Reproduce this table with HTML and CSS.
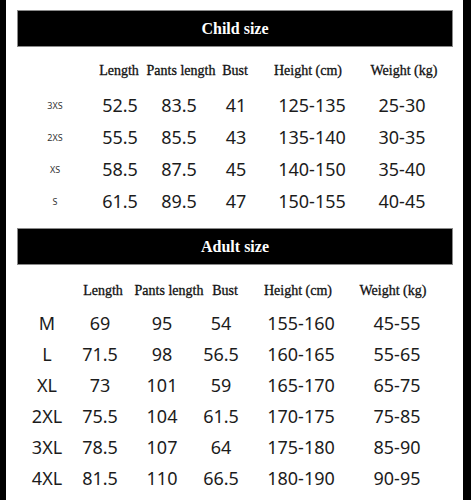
FILE: index.html
```html
<!DOCTYPE html>
<html>
<head>
<meta charset="utf-8">
<link rel="stylesheet" href="styles.css">
</head>
<body>
<div class="sheet">
  <div class="bar bar-child">Child size</div>
  <div class="row head child-head">
    <span></span><span>Length</span><span>Pants length</span><span>Bust</span><span>Height (cm)</span><span>Weight (kg)</span>
  </div>
  <div class="row data child-data"><span class="sz">3XS</span><span>52.5</span><span>83.5</span><span>41</span><span>125-135</span><span>25-30</span></div>
  <div class="row data child-data"><span class="sz">2XS</span><span>55.5</span><span>85.5</span><span>43</span><span>135-140</span><span>30-35</span></div>
  <div class="row data child-data"><span class="sz">XS</span><span>58.5</span><span>87.5</span><span>45</span><span>140-150</span><span>35-40</span></div>
  <div class="row data child-data"><span class="sz">S</span><span>61.5</span><span>89.5</span><span>47</span><span>150-155</span><span>40-45</span></div>

  <div class="bar bar-adult">Adult size</div>
  <div class="row head adult-head">
    <span></span><span>Length</span><span>Pants length</span><span>Bust</span><span>Height (cm)</span><span>Weight (kg)</span>
  </div>
  <div class="row data adult-data"><span>M</span><span>69</span><span>95</span><span>54</span><span>155-160</span><span>45-55</span></div>
  <div class="row data adult-data"><span>L</span><span>71.5</span><span>98</span><span>56.5</span><span>160-165</span><span>55-65</span></div>
  <div class="row data adult-data"><span>XL</span><span>73</span><span>101</span><span>59</span><span>165-170</span><span>65-75</span></div>
  <div class="row data adult-data"><span>2XL</span><span>75.5</span><span>104</span><span>61.5</span><span>170-175</span><span>75-85</span></div>
  <div class="row data adult-data"><span>3XL</span><span>78.5</span><span>107</span><span>64</span><span>175-180</span><span>85-90</span></div>
  <div class="row data adult-data"><span>4XL</span><span>81.5</span><span>110</span><span>66.5</span><span>180-190</span><span>90-95</span></div>
  <p class="note">1. Manual measurement, there may be an error of 1-3cm.</p>
</div>
</body>
</html>
```

FILE: styles.css
```css
html, body {
  margin: 0;
  padding: 0;
  background: #000;
}
.sheet {
  margin-left: 6px;
  width: 457px;
  min-height: 520px;
  background: #fff;
  padding-top: 10px;
  box-sizing: border-box;
  overflow: hidden;
}
.bar {
  margin-left: 11px;
  width: 436px;
  height: 37px;
  box-sizing: border-box;
  background: #000;
  border: 1px solid #8a8a8a;
  color: #fff;
  font-family: "Liberation Serif", "Times New Roman", serif;
  font-weight: bold;
  font-size: 16px;
  display: flex;
  align-items: center;
  justify-content: center;
}
.bar-adult {
  margin-top: 11px;
}
.row {
  display: grid;
  justify-items: center;
  align-items: center;
  white-space: nowrap;
}
.head {
  font-family: "Liberation Serif", "Times New Roman", serif;
  font-size: 14px;
  color: #111;
  -webkit-text-stroke: 0.3px #111;
  height: 32px;
}
.child-head {
  margin-top: 8px;
  margin-bottom: 2px;
  padding-left: 19px;
  grid-template-columns: 60px 68px 56px 52px 94px 98px;
}
.adult-head {
  margin-top: 10px;
  padding-left: 14px;
  grid-template-columns: 54px 58px 74px 38px 108px 82px;
}
.data {
  font-family: "Noto Sans", "DejaVu Sans", sans-serif;
  font-size: 18px;
  color: #1c1c1c;
}
.child-data {
  height: 32px;
  padding-left: 19px;
  grid-template-columns: 60px 70px 48px 66px 86px 94px;
}
.adult-data {
  height: 31px;
  padding-left: 14px;
  grid-template-columns: 54px 52px 72px 46px 114px 78px;
}
.sz {
  font-size: 9px;
  color: #333;
}
.note {
  margin: 3px 0 0 24px;
  font-family: "Noto Sans", sans-serif;
  font-size: 14px;
  color: #c8c8c8;
  white-space: nowrap;
}
```
